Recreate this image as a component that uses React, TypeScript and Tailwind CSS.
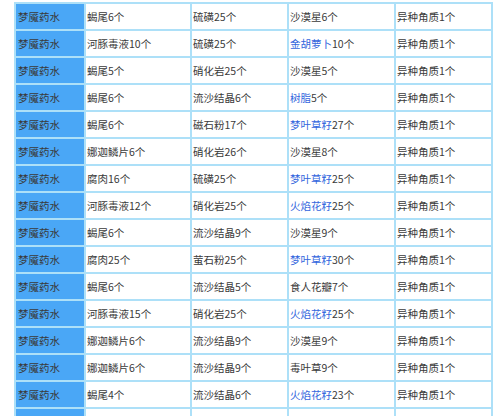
import React from "react";

type Cell = { link?: string; text: string };

const rows: Cell[][] = [
  [{ text: "蝎尾6个" }, { text: "硫磺25个" }, { text: "沙漠星6个" }],
  [{ text: "河豚毒液10个" }, { text: "硫磺25个" }, { link: "金胡萝卜", text: "10个" }],
  [{ text: "蝎尾5个" }, { text: "硝化岩25个" }, { text: "沙漠星5个" }],
  [{ text: "蝎尾6个" }, { text: "流沙结晶6个" }, { link: "树脂", text: "5个" }],
  [{ text: "蝎尾6个" }, { text: "磁石粉17个" }, { link: "梦叶草籽", text: "27个" }],
  [{ text: "娜迦鳞片6个" }, { text: "硝化岩26个" }, { text: "沙漠星8个" }],
  [{ text: "腐肉16个" }, { text: "硫磺25个" }, { link: "梦叶草籽", text: "25个" }],
  [{ text: "河豚毒液12个" }, { text: "硝化岩25个" }, { link: "火焰花籽", text: "25个" }],
  [{ text: "蝎尾6个" }, { text: "流沙结晶9个" }, { text: "沙漠星9个" }],
  [{ text: "腐肉25个" }, { text: "萤石粉25个" }, { link: "梦叶草籽", text: "30个" }],
  [{ text: "蝎尾6个" }, { text: "流沙结晶5个" }, { text: "食人花瓣7个" }],
  [{ text: "河豚毒液15个" }, { text: "硝化岩25个" }, { link: "火焰花籽", text: "25个" }],
  [{ text: "娜迦鳞片6个" }, { text: "流沙结晶9个" }, { text: "沙漠星9个" }],
  [{ text: "娜迦鳞片6个" }, { text: "流沙结晶9个" }, { text: "毒叶草9个" }],
  [{ text: "蝎尾4个" }, { text: "流沙结晶6个" }, { link: "火焰花籽", text: "23个" }],
  [{ text: "" }, { text: "" }, { text: "" }],
];

export default function App() {
  return (
    <div
      className="w-[500px] h-[416px] overflow-hidden bg-white pt-[2px] pl-[14px]"
      style={{ fontFamily: '"Noto Sans CJK SC", "Noto Sans", sans-serif' }}
    >
      <table className="border-collapse table-fixed w-[479px] text-[10.5px] text-[#3a3a3a]">
        <colgroup>
          <col className="w-[70px]" />
          <col className="w-[106px]" />
          <col className="w-[97px]" />
          <col className="w-[107px]" />
          <col className="w-[97px]" />
        </colgroup>
        <tbody>
          {rows.map((r, i) => (
            <tr key={i} className="h-[27px]">
              <td className="border-2 border-[#ade0f8] bg-[#4aa7f6] pl-[2px] align-middle">
                {i < 15 ? "梦魇药水" : ""}
              </td>
              {r.map((c, j) => (
                <td key={j} className="border-2 border-[#ade0f8] pl-[1px] align-middle whitespace-nowrap">
                  {c.link && <span className="text-[#3366dd]">{c.link}</span>}
                  {c.text}
                </td>
              ))}
              <td className="border-2 border-[#ade0f8] pl-[1px] align-middle whitespace-nowrap">
                {i < 15 ? "异种角质1个" : ""}
              </td>
            </tr>
          ))}
        </tbody>
      </table>
    </div>
  );
}
